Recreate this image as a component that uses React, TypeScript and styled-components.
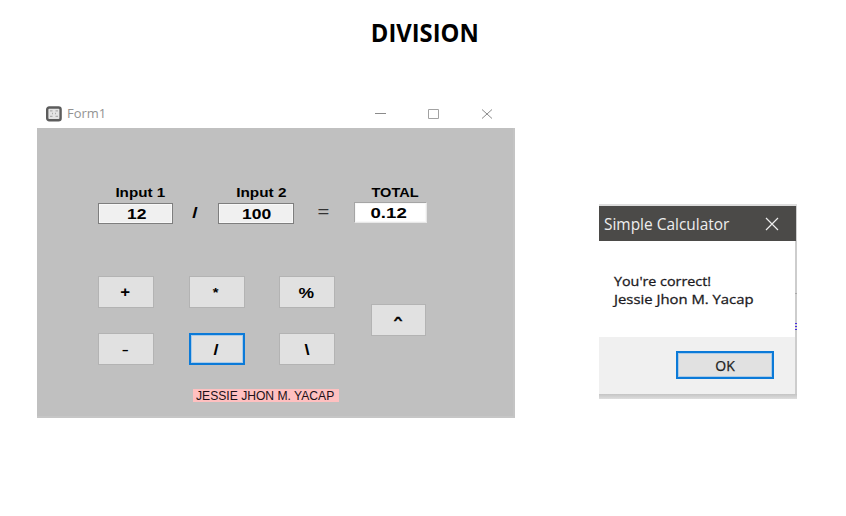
import React from "react";
import styled, { createGlobalStyle } from "styled-components";

const GlobalStyle = createGlobalStyle`
  * { box-sizing: border-box; }
  body { margin: 0; background: #fff; }
`;

const Page = styled.main`
  width: 846px;
  height: 516px;
  overflow: hidden;
  background: #fff;
  color: #000;
  font-family: "Liberation Sans", Arial, sans-serif;
`;

const Title = styled.h1`
  margin: 0;
  padding: 15px 0 0 4px;
  height: 100px;
  text-align: center;
  font: 700 25px/34px "Open Sans", "Noto Sans", sans-serif;
`;

const Windows = styled.div`
  display: flex;
  align-items: flex-start;
  padding-left: 37px;
  gap: 84px;
`;

const Stretch = styled.span<{ $x: number; $y?: number; $left?: boolean }>`
  display: inline-block;
  white-space: pre;
  transform: scale(${(p) => p.$x}, ${(p) => p.$y ?? 1});
  transform-origin: ${(p) => (p.$left ? "left" : "center")} center;
`;

/* Calculator form */
const FormWindow = styled.section`
  width: 478px;
`;

const FormBar = styled.header`
  height: 28px;
  display: flex;
  align-items: center;
  padding-left: 9px;
  color: #929292;
  font: 400 12px/28px "Open Sans", "Noto Sans", sans-serif;
`;

const FormName = styled.span`
  flex: 1;
  padding-left: 5px;
`;

const Controls = styled.div`
  display: flex;
  gap: 41px;
  padding-right: 22.5px;
  svg { display: block; }
`;

const FormBody = styled.div`
  height: 290px;
  padding: 57px 0 0 61px;
  background: #c0c0c0;
  border-right: 2px solid #c4c4c4;
  border-bottom: 2px solid #c6c6c6;
`;

const Equation = styled.div`
  display: grid;
  grid-template-columns: 75px 45px 76px 60px 73px;
  grid-template-rows: 17px 23px;
  font-weight: 700;
  font-size: 13px;
  text-align: center;
`;

const Caption = styled.div<{ $shift?: number }>`
  line-height: 15px;
  padding-left: ${(p) => p.$shift ?? 0}px;
`;

const Field = styled.div`
  margin-top: 1px;
  height: 21px;
  border: 1px solid #7e7e7e;
  background: #f0f0f0;
  box-shadow: inset 0 0 0 1px #f8f8f8;
  font-size: 14px;
  line-height: 20px;
  padding-left: 2px;
`;

const Total = styled(Field)`
  margin: 0;
  height: 21px;
  border-color: #a5a5a5 #e8e8e8 #e8e8e8 #a5a5a5;
  background: #fff;
  padding: 0 4px 0 0;
`;

const Sign = styled.div<{ $light?: boolean }>`
  line-height: ${(p) => (p.$light ? 20 : 22)}px;
  padding-right: ${(p) => (p.$light ? 2 : 0)}px;
  font-size: 15px;
  font-weight: ${(p) => (p.$light ? 400 : 700)};
  color: ${(p) => (p.$light ? "#333" : "#000")};
`;

const Pad = styled.div`
  display: flex;
  align-items: center;
  gap: 36px;
  margin-top: 51px;
`;

const Keys = styled.div`
  display: grid;
  grid-template-columns: 56px 56px 56px;
  column-gap: 34.5px;
  row-gap: 25px;
`;

const Key = styled.button<{ $active?: boolean }>`
  width: 56px;
  height: 32px;
  padding: 0 1px 0 0;
  display: flex;
  align-items: center;
  justify-content: center;
  border: ${(p) => (p.$active ? "2px solid #0b7ad8" : "1px solid #b3b3b3")};
  background: #e1e1e1;
  box-shadow: ${(p) => (p.$active ? "inset 0 0 0 1px #a9cae7" : "none")};
  color: #000;
  font: 700 14px/20px "Liberation Sans", Arial, sans-serif;
`;

const PowerKey = styled(Key)`
  width: 55px;
  margin-bottom: 1px;
  -webkit-text-stroke: 0.6px #000;
`;

const Author = styled.div`
  width: 146px;
  height: 13px;
  margin: 24px 0 0 95px;
  padding-left: 3px;
  background: #ffc0c0;
  color: #201018;
  font-size: 12px;
  line-height: 14px;
  white-space: nowrap;
`;

/* Message box */
const Dialog = styled.section`
  width: 198px;
  height: 195px;
  margin-top: 104px;
  padding: 2px 1px 5px 0;
  background: linear-gradient(#dedede 0 2px, #cdcdcd 2px 190px, #c4c4c4 190px, #dedede 195px);
  font-family: "Open Sans", "Noto Sans", sans-serif;
`;

const DialogBar = styled.header`
  width: 197px;
  height: 35px;
  display: flex;
  align-items: center;
  justify-content: space-between;
  padding: 0 17px 0 5px;
  background: #4b4a48;
  color: #eee;
  font-size: 16px;
  line-height: 20px;
`;

const Message = styled.div`
  position: relative;
  width: 196px;
  height: 96px;
  padding: 31px 0 0 15px;
  background: #fff;
  color: #1c1a22;
  font-size: 13.5px;
  line-height: 18px;
  -webkit-text-stroke: 0.3px #1c1a22;
`;

const EdgeMark = styled.svg`
  position: absolute;
  left: 196px;
  top: 51px;
`;

const Footer = styled.footer`
  width: 196px;
  height: 57px;
  display: flex;
  justify-content: flex-end;
  align-items: center;
  padding: 0 21px 1px 0;
  background: #f0f0f0;
`;

const OkButton = styled(Key)`
  width: 98px;
  height: 28px;
  padding: 1px 0 0;
  font: 400 14px/20px "Open Sans", "Noto Sans", sans-serif;
  color: #222;
  -webkit-text-stroke: 0.25px #222;
`;

const Line = styled.div``;

const FormIcon = () => (
  <svg width="16" height="16" viewBox="0 0 16 16">
    <rect x="1.2" y="1.5" width="13.4" height="12.8" rx="2" fill="#e4e4e4" stroke="#5c5c5c" strokeWidth="2.4" />
    <path d="M4 4.8h2.5M9.5 4.8h2.5M6 7.5h1M9 7.5h1M4 10.3h2.5M9.5 10.3h2.5" stroke="#adadad" strokeWidth="1.3" />
  </svg>
);

const keys: { label: string; x: number; y?: number; active?: boolean }[] = [
  { label: "+", x: 1.2 },
  { label: "*", x: 1.05, y: 0.9 },
  { label: "%", x: 1.25, y: 1.1 },
  { label: "-", x: 1.5, y: 0.75 },
  { label: "/", x: 1.3, y: 1.1, active: true },
  { label: "\\", x: 1.3, y: 1.1 },
];

export default function App() {
  return (
    <Page>
      <GlobalStyle />
      <Title><Stretch $x={0.95}>DIVISION</Stretch></Title>
      <Windows>
        <FormWindow>
          <FormBar>
            <FormIcon />
            <FormName><Stretch $x={1.08} $left>Form1</Stretch></FormName>
            <Controls>
              <svg width="12" height="12"><path d="M0 5.5h11" stroke="#8b8b8b" /></svg>
              <svg width="12" height="12"><path d="M.5 1.5h10v9H.5z" fill="none" stroke="#a2a2a2" /></svg>
              <svg width="12" height="12"><path d="M1 1.5l10 9M11 1.5l-10 9" stroke="#8b8b8b" /></svg>
            </Controls>
          </FormBar>
          <FormBody>
            <Equation>
              <Caption $shift={10}><Stretch $x={1.17}>Input 1</Stretch></Caption>
              <span />
              <Caption $shift={10}><Stretch $x={1.18}>Input 2</Stretch></Caption>
              <span />
              <Caption $shift={9}><Stretch $x={1.12}>TOTAL</Stretch></Caption>
              <Field><Stretch $x={1.25}>12</Stretch></Field>
              <Sign><Stretch $x={1.3}>/</Stretch></Sign>
              <Field><Stretch $x={1.25}>100</Stretch></Field>
              <Sign $light><Stretch $x={1.35}>=</Stretch></Sign>
              <Total><Stretch $x={1.33}>0.12</Stretch></Total>
            </Equation>
            <Pad>
              <Keys>
                {keys.map((k) => (
                  <Key key={k.label} $active={k.active}>
                    <Stretch $x={k.x} $y={k.y}>{k.label}</Stretch>
                  </Key>
                ))}
              </Keys>
              <PowerKey><Stretch $x={1.05} $y={0.65}>^</Stretch></PowerKey>
            </Pad>
            <Author><Stretch $x={1.01} $left>JESSIE JHON M. YACAP</Stretch></Author>
          </FormBody>
        </FormWindow>
        <Dialog>
          <DialogBar>
            <Stretch $x={0.965} $left>Simple Calculator</Stretch>
            <svg width="14" height="14"><path d="M1 1l12 12M13 1L1 13" stroke="#eee" strokeWidth="1.2" /></svg>
          </DialogBar>
          <Message>
            <Line><Stretch $x={1.06} $left>You're correct!</Stretch></Line>
            <Line><Stretch $x={1.1} $left>Jessie Jhon M. Yacap</Stretch></Line>
            <EdgeMark width="2" height="40">
              <path d="M0 31.5h2M0 34.5h2M0 37.5h2" stroke="#4a2ee0" />
              <path d="M0 1.5h2" stroke="#a8a8a8" />
            </EdgeMark>
          </Message>
          <Footer><OkButton $active><Stretch $x={1}>OK</Stretch></OkButton></Footer>
        </Dialog>
      </Windows>
    </Page>
  );
}
